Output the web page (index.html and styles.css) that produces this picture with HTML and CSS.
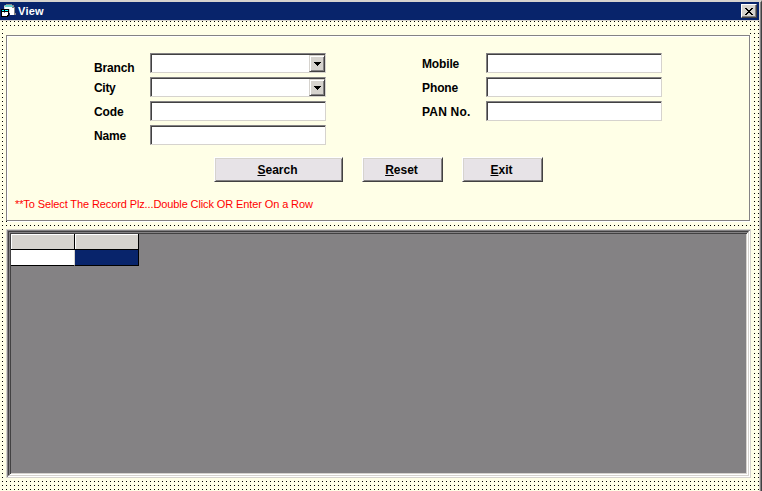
FILE: index.html
```html
<!DOCTYPE html>
<html lang="en">
<head>
<meta charset="utf-8">
<title>View</title>
<link rel="stylesheet" href="styles.css">
</head>
<body>
<div class="window">
  <header class="titlebar">
    <svg class="app-icon" width="16" height="14" viewBox="0 0 16 14" shape-rendering="crispEdges">
      <path fill="#848284" d="M3 1h2V0h6v1h2v2h1v6h1v2H9V6H3z"/>
      <path fill="#d6d3ce" d="M3 2h8v7H8V5H3z"/>
      <path fill="#fff" d="M4 3h7v1h2v7H9V5H4z"/>
      <path fill="#63cfce" d="M4 1h7v1h1v1H4z"/>
      <path fill="#000" d="M0 5h8v7H7v1H0z"/>
      <path fill="#fff" d="M1 8h6v3H6v1H1z"/>
      <path fill="#00ffff" d="M1 6h2v1H1zM4 6h3v1H4z"/>
      <path fill="#848284" d="M3 8h1v1H3z"/>
    </svg>
    <h1 class="title">View</h1>
    <button class="close" aria-label="Close">
      <svg width="8" height="7" viewBox="0 0 8 7" shape-rendering="crispEdges"><path d="M0 0h2v1h1v1h2V1h1V0h2v1H7v1H6v1H5v1h1v1h1v1h1v1H6V6H5V5H3v1H2v1H0V6h1V5h1V4h1V3H2V2H1V1H0z"/></svg>
    </button>
  </header>
  <main class="form">
    <section class="frame">
      <div class="fields">
        <div class="column left">
          <div class="row"><label class="label branch">Branch</label><div class="input combo"><button class="drop" aria-label="Open"><svg width="7" height="4" viewBox="0 0 7 4" shape-rendering="crispEdges"><path d="M0 0h7v1H6v1H5v1H4v1H3V3H2V2H1V1H0z"/></svg></button></div></div>
          <div class="row"><label class="label city">City</label><div class="input combo"><button class="drop" aria-label="Open"><svg width="7" height="4" viewBox="0 0 7 4" shape-rendering="crispEdges"><path d="M0 0h7v1H6v1H5v1H4v1H3V3H2V2H1V1H0z"/></svg></button></div></div>
          <div class="row"><label class="label code">Code</label><div class="input"></div></div>
          <div class="row"><label class="label name">Name</label><div class="input"></div></div>
        </div>
        <div class="column right">
          <div class="row"><label class="label mobile">Mobile</label><div class="input"></div></div>
          <div class="row"><label class="label phone">Phone</label><div class="input"></div></div>
          <div class="row"><label class="label pan">PAN No.</label><div class="input"></div></div>
        </div>
      </div>
      <div class="actions">
        <button class="btn search"><span><u>S</u>earch</span></button>
        <button class="btn reset"><span><u>R</u>eset</span></button>
        <button class="btn exit"><span><u>E</u>xit</span></button>
      </div>
      <p class="hint">**To Select The Record Plz...Double Click OR Enter On a Row</p>
    </section>
    <section class="grid-outer">
      <div class="grid-inner">
        <div class="cells">
          <div class="cell head"></div><div class="cell head"></div>
          <div class="cell blank"></div><div class="cell selected"></div>
        </div>
      </div>
    </section>
  </main>
</div>
</body>
</html>
```
FILE: styles.css
```css
* { box-sizing: border-box; }
body { margin: 0; background: #ffffe7; font-family: "Liberation Sans", Arial, sans-serif; overflow: hidden; }
button { margin: 0; padding: 0; font: inherit; }
.window {
  width: 762px; height: 491px;
  border-top: 2px solid #d6d3ce;
  border-right: 1px solid #424142;
  box-shadow: inset -1px 0 #848284, inset -2px 0 #d6d3ce;
  padding-right: 2px;
  display: flex; flex-direction: column;
}
.titlebar { height: 18px; flex: none; background: #08246b; display: flex; align-items: center; padding: 0 2px 0 1px; }
.app-icon { display: block; flex: none; }
.title { margin: 0 auto 0 1px; color: #fff; font-size: 11px; font-weight: bold; line-height: 18px; letter-spacing: .25px; }
.close {
  width: 16px; height: 14px; background: #d6d3ce; border: 1px solid;
  border-color: #fff #424142 #424142 #fff; box-shadow: inset -1px -1px #848284;
  display: flex; align-items: center; justify-content: center;
}
.form {
  flex: 1; padding: 14px 8px 13px 6px; border-top: 1px solid #d6d3ce;
  background:
    linear-gradient(90deg, transparent 1px, #ffffe7 1px) 2px 0 / 4px 4px,
    linear-gradient(transparent 1px, #ffffe7 1px) 2px 0 / 4px 4px,
    #000;
  display: flex; flex-direction: column;
}
.frame {
  width: 744px; height: 186px; flex: none; border: 1px solid #848284; background: #ffffe7;
  box-shadow: inset 1px 1px #fff, 1px 1px #fff, 0 -7px #ffffe7; padding: 17px 0 0 87px;
}
.fields { display: flex; gap: 96px; height: 104px; }
.column { display: flex; flex-direction: column; gap: 4px; }
.row { display: flex; height: 20px; }
.label { font-size: 12px; font-weight: bold; line-height: 14px; padding-top: 4px; white-space: nowrap; }
.left .label { width: 56px; }
.right .label { width: 64px; }
.label.branch { padding-top: 8px; letter-spacing: -.15px; }
.city { letter-spacing: -.3px; }
.code { letter-spacing: -.1px; }
.name { letter-spacing: -.2px; }
.mobile { letter-spacing: -.15px; }
.phone { letter-spacing: -.1px; }
.pan { letter-spacing: .2px; }
.input {
  width: 176px; height: 20px; background: #fff; border: 1px solid;
  border-color: #848284 #d6d3ce #d6d3ce #848284; box-shadow: inset 1px 1px #424142;
}
.combo { display: flex; justify-content: flex-end; padding: 1px 0 0; }
.drop {
  width: 16px; height: 17px; background: #d6d3ce; border: 1px solid;
  border-color: #d6d3ce #424142 #424142 #d6d3ce; box-shadow: inset 1px 1px #fff, inset -1px -1px #848284;
  display: flex; align-items: center; justify-content: center;
}
.actions { display: flex; gap: 19px; padding-left: 120px; }
.btn {
  width: 81px; height: 25px; background: #e7e3e7; border: 1px solid;
  border-color: #fff #424142 #424142 #fff; box-shadow: inset 1px 1px #d6d3ce, inset -1px -1px #848284;
  font-size: 12px; font-weight: bold; line-height: 14px;
}
.btn.search { width: 129px; }
.btn span { display: block; margin-left: -2px; }
.search { letter-spacing: 0; }
.reset { letter-spacing: 0; }
.btn u { text-decoration: underline; text-decoration-thickness: 1px; text-underline-offset: 1px; }
.hint { margin: 15px 0 0 -79px; color: #f00; font-size: 11px; line-height: 14px; letter-spacing: -.11px; white-space: nowrap; }
.grid-outer {
  margin-top: 8px; height: 249px; width: 745px; flex: none; border: 1px solid #d6d3ce;
  box-shadow: inset 1px 1px #848284, inset -1px -1px #fff; padding: 1px;
}
.grid-inner {
  height: 245px; background: #848284; border: 1px solid;
  border-color: #424142 #d6d3ce #d6d3ce #424142;
  box-shadow: inset 1px 1px #848284, inset -1px -1px #fff, inset 2px 2px #424142, inset -2px -2px #d6d3ce;
  padding: 2px;
}
.cells { display: grid; grid-template-columns: 64px 64px; grid-template-rows: 16px 16px; }
.cell { border-right: 1px solid #000; border-bottom: 1px solid #000; }
.head { background: #d6d3ce; box-shadow: inset 1px 1px #fff; }
.blank { background: #fff; border-right-color: #d6d3ce; }
.selected { background: #08246b; }
```
